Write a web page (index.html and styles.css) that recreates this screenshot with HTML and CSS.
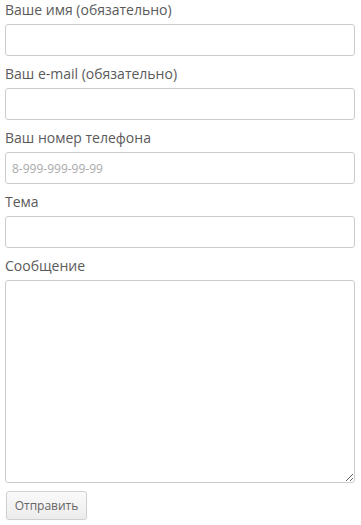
FILE: index.html
```html
<!DOCTYPE html>
<html lang="ru">
<head>
    <meta charset="UTF-8">
    <meta name="viewport" content="width=device-width, initial-scale=1.0">
    <title>Обратная связь</title>
    <link rel="stylesheet" href="styles.css">
</head>
<body>
    <!-- Форма обратной связи -->
    <form class="contact-form">
        <label class="field-label" for="name">Ваше имя (обязательно)</label>
        <input class="field" type="text" id="name">

        <label class="field-label" for="email">Ваш e-mail (обязательно)</label>
        <input class="field" type="email" id="email">

        <label class="field-label" for="phone">Ваш номер телефона</label>
        <input class="field" type="tel" id="phone" placeholder="8-999-999-99-99">

        <label class="field-label" for="subject">Тема</label>
        <input class="field" type="text" id="subject">

        <label class="field-label" for="message">Сообщение</label>
        <textarea class="field field-message" id="message"></textarea>

        <button type="button" class="submit-btn">Отправить</button>
    </form>
</body>
</html>
```

FILE: styles.css
```css
/* Базовые стили */
body {
    font-family: "Open Sans", Arial, sans-serif;
    background-color: #fff;
    margin: 0;
    padding: 0;
}

/* Форма */
.contact-form {
    display: flex;
    flex-direction: column;
    align-items: flex-start;
    padding: 0 6px 0 5px;
}

.field-label {
    font-size: 14px;
    line-height: 20px;
    color: #5a5a5a;
    margin-bottom: 4px;
}

.field {
    box-sizing: border-box;
    width: 100%;
    height: 32px;
    margin: 0 0 8px;
    padding: 0 6px;
    border: 1px solid #ccc;
    border-radius: 3px;
    background: #fff;
    font-family: "Open Sans", Arial, sans-serif;
    font-size: 12px;
    color: #555;
}

.field::placeholder {
    color: #aaa;
}

.field-message {
    height: 203px;
    resize: vertical;
}

/* Кнопка отправки */
.submit-btn {
    box-sizing: border-box;
    width: 81px;
    height: 29px;
    margin-left: 1px;
    border: 1px solid #d0d0d0;
    border-radius: 3px;
    background: linear-gradient(#fafafa, #ececec);
    box-shadow: 0 1px 1px rgba(0, 0, 0, 0.08);
    font-family: "Open Sans", Arial, sans-serif;
    font-size: 12px;
    color: #666;
    cursor: pointer;
}
```
